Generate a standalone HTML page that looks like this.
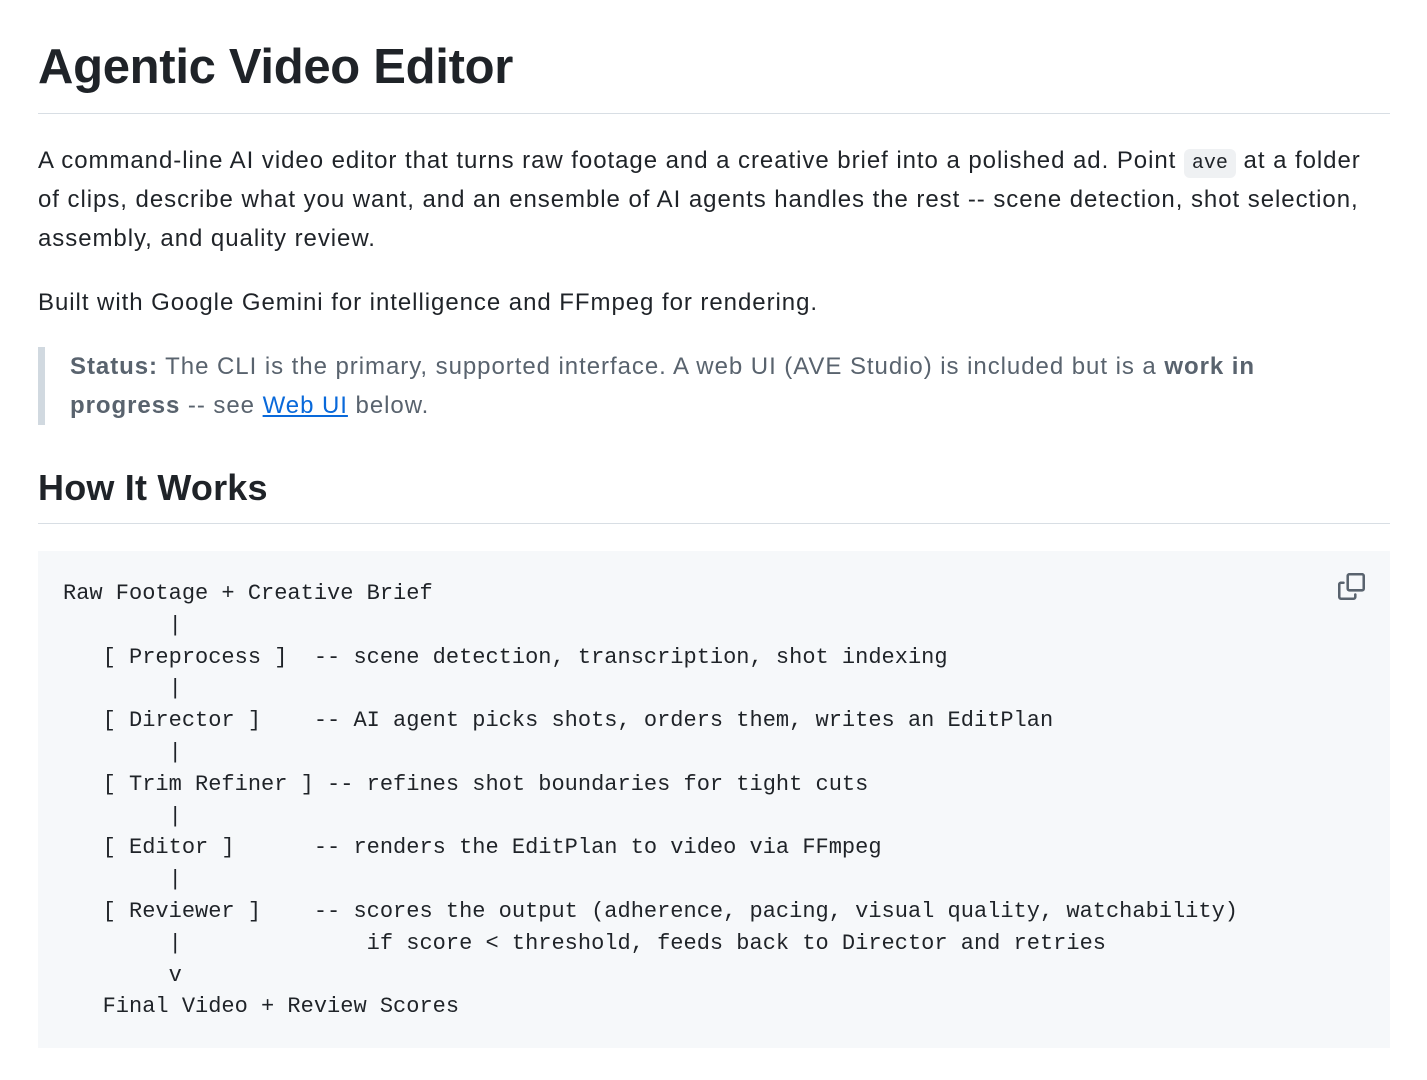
<!DOCTYPE html>
<html><head><meta charset="utf-8"><style>
body{margin:0;background:#fff;width:1427px;height:1080px;overflow:hidden;font-family:"Liberation Sans",sans-serif;color:#1f2328;}
.w{position:absolute;left:38px;width:1352px;}
h1{position:absolute;left:38px;top:36px;margin:0;font-size:49px;font-weight:bold;line-height:62px;letter-spacing:-0.3px;}
.hr{position:absolute;left:38px;width:1352px;height:1px;background:#d8dee4;}
p{margin:0;font-size:24px;line-height:39px;letter-spacing:0.95px;}
code{font-family:"Liberation Mono",monospace;font-size:20px;line-height:20px;letter-spacing:0;background:#eff1f3;border-radius:6px;padding:3px 8px;}
.bq{position:absolute;left:38px;top:347px;width:1280px;border-left:7px solid #d1d9e0;padding-left:25px;color:#59636e;}
.bq b{color:#59636e}
a{color:#0969da;text-decoration:underline;}
h2{position:absolute;left:38px;top:465px;margin:0;font-size:36px;line-height:46px;font-weight:bold;letter-spacing:0.2px;}
pre{position:absolute;left:38px;top:551px;width:1302px;height:445px;margin:0;padding:27px 25px 25px;background:#f6f8fa;font-family:"Liberation Mono",monospace;font-size:22px;line-height:31.8px;color:#1f2328;}
</style></head><body>
<h1>Agentic Video Editor</h1>
<div class="hr" style="top:113px"></div>
<div class="w" style="top:141px"><p>A command-line AI video editor that turns raw footage and a creative brief into a polished ad. Point <code>ave</code> at a folder of clips, describe what you want, and an ensemble of AI agents handles the rest -- scene detection, shot selection, assembly, and quality review.</p></div>
<div class="w" style="top:283px"><p>Built with Google Gemini for intelligence and FFmpeg for rendering.</p></div>
<div class="bq"><p><b>Status:</b> The CLI is the primary, supported interface. A web UI (AVE Studio) is included but is a <b>work in progress</b> -- see <a>Web UI</a> below.</p></div>
<h2>How It Works</h2>
<div class="hr" style="top:523px"></div>
<pre>Raw Footage + Creative Brief
        |
   [ Preprocess ]  -- scene detection, transcription, shot indexing
        |
   [ Director ]    -- AI agent picks shots, orders them, writes an EditPlan
        |
   [ Trim Refiner ] -- refines shot boundaries for tight cuts
        |
   [ Editor ]      -- renders the EditPlan to video via FFmpeg
        |
   [ Reviewer ]    -- scores the output (adherence, pacing, visual quality, watchability)
        |              if score &lt; threshold, feeds back to Director and retries
        v
   Final Video + Review Scores</pre>
<svg style="position:absolute;left:1338px;top:573px" width="27" height="27" viewBox="0 0 16 16" fill="#59636e"><path d="M0 6.75C0 5.784.784 5 1.750 5h1.5a.75.75 0 0 1 0 1.5h-1.5a.25.25 0 0 0-.25.25v7.5c0 .138.112.25.25.25h7.5a.25.25 0 0 0 .25-.25v-1.5a.75.75 0 0 1 1.5 0v1.5A1.75 1.75 0 0 1 9.25 16h-7.5A1.75 1.75 0 0 1 0 14.25Z"/><path d="M5 1.75C5 .784 5.784 0 6.75 0h7.5C15.216 0 16 .784 16 1.75v7.5A1.75 1.75 0 0 1 14.25 11h-7.5A1.75 1.750 0 0 1 5 9.25Zm1.75-.25a.25.25 0 0 0-.25.25v7.5c0 .138.112.25.25.25h7.5a.25.25 0 0 0 .25-.25v-7.5a.25.25 0 0 0-.25-.25Z"/></svg>
</body></html>
